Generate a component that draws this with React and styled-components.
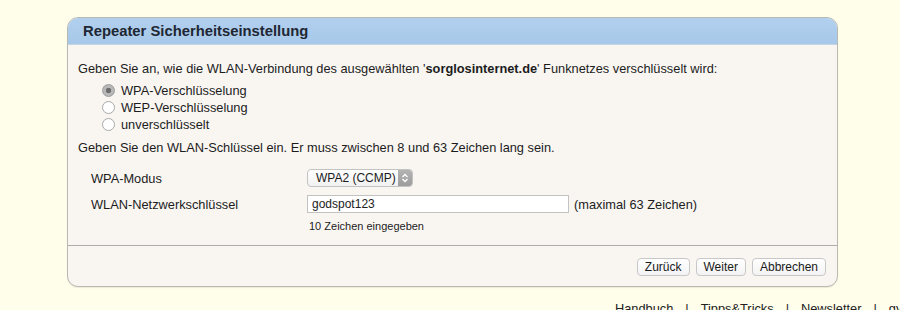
import styled, { createGlobalStyle } from "styled-components";

const GlobalStyle = createGlobalStyle`
  html, body {
    margin: 0;
    padding: 0;
    background: #fffeea;
    font-family: "Liberation Sans", Arial, sans-serif;
    color: #222;
    overflow: hidden;
  }
`;

const Page = styled.div`
  width: 900px;
  height: 310px;
  padding: 17px 0 0 67px;
  box-sizing: border-box;
  overflow: hidden;
`;

const Panel = styled.div`
  width: 771px;
  height: 270px;
  box-sizing: border-box;
  border: 1px solid #b9b9b4;
  border-radius: 11px;
  background: #f9f6f2;
  overflow: hidden;
  display: flex;
  flex-direction: column;
  box-shadow: 0 1px 1px rgba(0, 0, 0, 0.08);
`;

const Header = styled.div`
  height: 26px;
  background: linear-gradient(#b2d0ee, #a7c8e9);
  border-bottom: 1px solid #c5d5e4;
  display: flex;
  align-items: center;
  padding-left: 15px;
`;

const Title = styled.h1`
  margin: 0;
  font-size: 14.8px;
  font-weight: bold;
  color: #1e2733;
`;

const Body = styled.div`
  flex: 1;
  padding: 15px 0 0 10px;
  font-size: 12.8px;
  line-height: 17px;
  color: #1c1c1c;
`;

const Text = styled.p`
  margin: 0;
`;

const RadioList = styled.div`
  margin: 5px 0 6px 24px;
  display: flex;
  flex-direction: column;
`;

const RadioRow = styled.label`
  display: flex;
  align-items: center;
  gap: 6px;
  height: 17px;
`;

const RadioDot = styled.span`
  width: 13px;
  height: 13px;
  border-radius: 50%;
  box-sizing: border-box;
  border: 1px solid ${(p) => (p.checked ? "#9a9a9a" : "#a9a9a9")};
  background: ${(p) =>
    p.checked ? "radial-gradient(circle, #6d6d6d 0 2.5px, #b8b8b8 3px)" : "#fff"};
`;

const Form = styled.div`
  margin: 13px 0 0 13px;
  display: grid;
  grid-template-columns: 216px auto;
  row-gap: 8px;
  align-items: center;
`;

const Label = styled.span``;

const Field = styled.div`
  display: flex;
  align-items: center;
  gap: 5px;
`;

const SelectBox = styled.div`
  width: 106px;
  height: 18px;
  box-sizing: border-box;
  border: 1px solid #c3c3c3;
  border-radius: 4px;
  background: linear-gradient(#ffffff, #f1f1f1);
  display: flex;
  align-items: center;
  justify-content: space-between;
  font-size: 12px;
  padding-left: 8px;
  overflow: hidden;
`;

const ArrowBox = styled.span`
  width: 14px;
  height: 16px;
  background: linear-gradient(#b3b3b3, #9d9d9d);
  display: flex;
  align-items: center;
  justify-content: center;
`;

const TextInput = styled.input`
  width: 262px;
  height: 18px;
  box-sizing: border-box;
  border: 1px solid #c2c2c2;
  background: #fff;
  font-family: "Liberation Sans", Arial, sans-serif;
  font-size: 12px;
  color: #222;
  padding: 0 4px;
  outline: none;
`;

const Hint = styled.span`
  grid-column: 2;
  font-size: 11px;
  padding-left: 2px;
  margin-top: -3px;
`;

const Footer = styled.div`
  height: 41px;
  border-top: 1px solid #adadad;
  display: flex;
  justify-content: flex-end;
  align-items: flex-start;
  gap: 6px;
  padding: 12px 11px 0 0;
  box-sizing: border-box;
`;

const Button = styled.button`
  height: 18px;
  padding: 0 7px;
  border: 1px solid #c8c8c8;
  border-radius: 4px;
  background: linear-gradient(#ffffff, #f3f3f3);
  font-family: "Liberation Sans", Arial, sans-serif;
  font-size: 12px;
  color: #1a1a1a;
  line-height: 16px;
`;

const Links = styled.nav`
  margin: 14px 0 0 548px;
  display: flex;
  gap: 12px;
  font-size: 12.8px;
  line-height: 15px;
  color: #222;
  white-space: nowrap;
`;

const Link = styled.a`
  color: inherit;
  text-decoration: none;
`;

function Arrows() {
  return (
    <svg width="8" height="10" viewBox="0 0 8 10">
      <path d="M1.5 4 L4 1.5 L6.5 4 M1.5 6 L4 8.5 L6.5 6" fill="none" stroke="#fff" strokeWidth="1.3" />
    </svg>
  );
}

const options = ["WPA-Verschlüsselung", "WEP-Verschlüsselung", "unverschlüsselt"];

export default function App() {
  return (
    <>
      <GlobalStyle />
      <Page>
        <Panel>
          <Header>
            <Title>Repeater Sicherheitseinstellung</Title>
          </Header>
          <Body>
            <Text>
              Geben Sie an, wie die WLAN-Verbindung des ausgewählten '<b>sorglosinternet.de</b>' Funknetzes verschlüsselt wird:
            </Text>
            <RadioList>
              {options.map((o, i) => (
                <RadioRow key={o}>
                  <RadioDot checked={i === 0} />
                  {o}
                </RadioRow>
              ))}
            </RadioList>
            <Text>Geben Sie den WLAN-Schlüssel ein. Er muss zwischen 8 und 63 Zeichen lang sein.</Text>
            <Form>
              <Label>WPA-Modus</Label>
              <Field>
                <SelectBox>
                  WPA2 (CCMP)
                  <ArrowBox>
                    <Arrows />
                  </ArrowBox>
                </SelectBox>
              </Field>
              <Label>WLAN-Netzwerkschlüssel</Label>
              <Field>
                <TextInput defaultValue="godspot123" />
                (maximal 63 Zeichen)
              </Field>
              <Hint>10 Zeichen eingegeben</Hint>
            </Form>
          </Body>
          <Footer>
            <Button>Zurück</Button>
            <Button>Weiter</Button>
            <Button>Abbrechen</Button>
          </Footer>
        </Panel>
        <Links>
          <Link>Handbuch</Link>|<Link>Tipps&amp;Tricks</Link>|<Link>Newsletter</Link>|<Link>gvo</Link>
        </Links>
      </Page>
    </>
  );
}
